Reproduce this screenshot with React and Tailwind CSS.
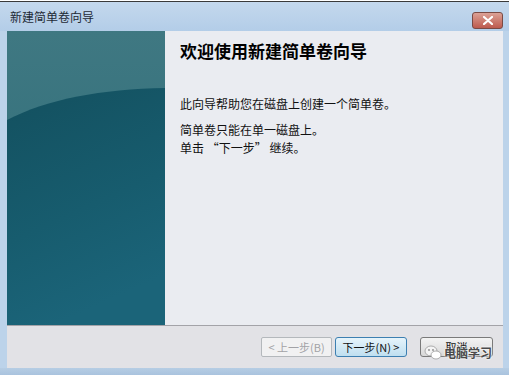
const font = { fontFamily: '"Noto Sans CJK SC", "Noto Sans", sans-serif' };

function Banner() {
  return (
    <svg width="158" height="294" viewBox="0 0 158 294" className="block">
      <defs>
        <linearGradient id="top" x1="0" y1="0" x2="0" y2="1">
          <stop offset="0" stopColor="#3f7882" />
          <stop offset="1" stopColor="#2c6c78" />
        </linearGradient>
        <linearGradient id="bot" x1="0" y1="0" x2="0.3" y2="1">
          <stop offset="0" stopColor="#13505f" />
          <stop offset="0.6" stopColor="#175c6e" />
          <stop offset="1" stopColor="#1b6479" />
        </linearGradient>
      </defs>
      <rect width="158" height="294" fill="url(#top)" />
      <path d="M0 89 C 40 68, 95 58, 158 57 L158 294 L0 294 Z" fill="url(#bot)" />
    </svg>
  );
}

export default function App() {
  return (
    <div className="w-[509px] h-[375px] overflow-hidden flex flex-col bg-[#bcd3ea]" style={font}>
      <div className="h-[2px] bg-white border-b border-[#3a3a3a]" />
      <div className="h-[29px] flex items-center justify-between pl-[10px] pr-[6px] bg-gradient-to-b from-[#c4d8ed] to-[#b3cde8]">
        <span className="text-[12px] text-[#1e2a36]">新建简单卷向导</span>
        <div className="w-[31px] h-[17px] mt-[8px] rounded-[3px] border border-[#7a4a44] bg-gradient-to-b from-[#dba196] to-[#bd5a4e] flex items-center justify-center">
          <svg width="10" height="9" viewBox="0 0 10 9">
            <path d="M1 1 L9 8 M9 1 L1 8" stroke="#ffffff" strokeWidth="2.2" strokeLinecap="round" />
          </svg>
        </div>
      </div>
      <div className="flex-1 flex flex-col ml-[7px] mr-[6px]">
        <div className="h-[294px] flex">
          <div className="w-[158px] shrink-0">
            <Banner />
          </div>
          <div className="flex-1 bg-[#eaecf1] pl-[15px] pt-[8px]">
            <h1 className="text-[17px] font-bold text-black leading-[24px]">欢迎使用新建简单卷向导</h1>
            <p className="mt-[32px] text-[12px] leading-[18px] text-[#111]">此向导帮助您在磁盘上创建一个简单卷。</p>
            <p className="mt-[8px] text-[12px] leading-[18px] text-[#111]">简单卷只能在单一磁盘上。</p>
            <p className="text-[12px] leading-[18px] text-[#111]">单击 “下一步” 继续。</p>
          </div>
        </div>
        <div className="h-px bg-[#a3a3a8]" />
        <div className="flex-1 bg-[#e2e2e6] flex justify-end items-start pt-[11px] pr-[10px]">
          <button className="w-[71px] h-[20px] border border-[#b4b8bc] rounded-[2px] bg-[#f1f1f2] text-[11px] text-[#a2a2a6] flex items-center justify-center">
            &lt; 上一步(B)
          </button>
          <button className="ml-[3px] w-[72px] h-[20px] border border-[#3c7fb1] rounded-[3px] bg-gradient-to-b from-[#e6f4fb] to-[#bfdff0] text-[11px] text-[#111] flex items-center justify-center">
            下一步(N) &gt;
          </button>
          <div className="relative ml-[13px]">
            <button className="w-[73px] h-[20px] border border-[#7a7a7a] rounded-[3px] bg-gradient-to-b from-[#f3f3f3] to-[#d8d8d8] text-[11px] text-[#111] flex items-start justify-center pt-[1px]">
              取消
            </button>
            <div className="absolute left-[4px] top-[7px] flex items-center gap-[2px]">
              <svg width="18" height="16" viewBox="0 0 18 16">
                <ellipse cx="7" cy="6" rx="6" ry="5" fill="#f4f4f4" stroke="#9a9a9a" strokeWidth="0.8" />
                <ellipse cx="12" cy="10" rx="5" ry="4" fill="#ffffff" stroke="#9a9a9a" strokeWidth="0.8" />
                <circle cx="5" cy="5" r="0.9" fill="#888" />
                <circle cx="9" cy="5" r="0.9" fill="#888" />
              </svg>
              <span className="text-[12px] font-bold text-[#4a4a4a] [text-shadow:0_0_2px_#fff,0_0_2px_#fff]">电脑学习</span>
            </div>
          </div>
        </div>
      </div>
      <div className="h-[7px] bg-gradient-to-b from-[#b6cde4] to-[#a9c3de]" />
    </div>
  );
}
